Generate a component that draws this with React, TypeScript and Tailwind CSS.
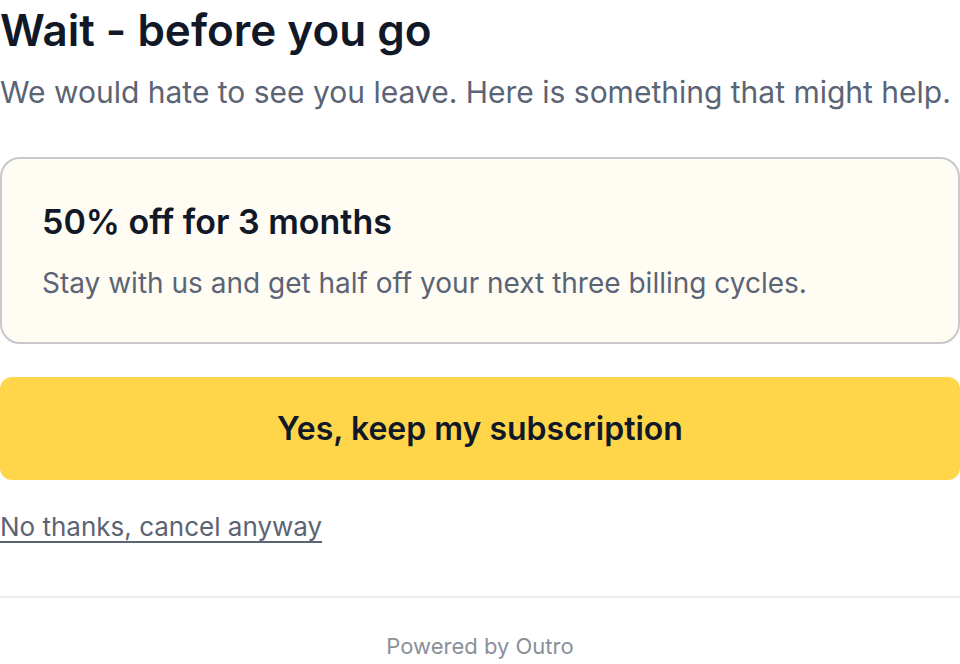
const App = () => {
  return (
    <div className="min-h-screen bg-white font-['Inter',sans-serif] text-[#111827]">
      <div className="flex flex-col">
        <h1 className="text-[44px] leading-[60px] font-semibold">Wait - before you go</h1>
        <p className="mt-[12px] text-[30px] leading-[40px] text-[#5b6474]">
          We would hate to see you leave. Here is something that might help.
        </p>

        <div className="mt-[45px] rounded-[20px] border-2 border-[#c6c8cc] bg-[#fffcf4] px-[40px] pt-[41px] pb-[40px]">
          <h2 className="text-[34px] leading-[44px] font-semibold">50% off for 3 months</h2>
          <p className="mt-[20px] text-[28px] leading-[38px] text-[#5b6474]">
            Stay with us and get half off your next three billing cycles.
          </p>
        </div>

        <button className="mt-[33px] h-[103px] w-full rounded-[12px] bg-[#ffd64a] text-[32px] font-semibold text-[#111827]">
          Yes, keep my subscription
        </button>

        <div className="mt-[29px]">
          <a href="#" className="text-[26px] leading-[36px] text-[#5b6474] underline underline-offset-[5px]">
            No thanks, cancel anyway
          </a>
        </div>

        <div className="mt-[51px] border-t-2 border-[#eceef0] pt-[33px] pb-[8px] text-center text-[22px] leading-[30px] text-[#8a909b]">
          Powered by Outro
        </div>
      </div>
    </div>
  );
};

export default App;
